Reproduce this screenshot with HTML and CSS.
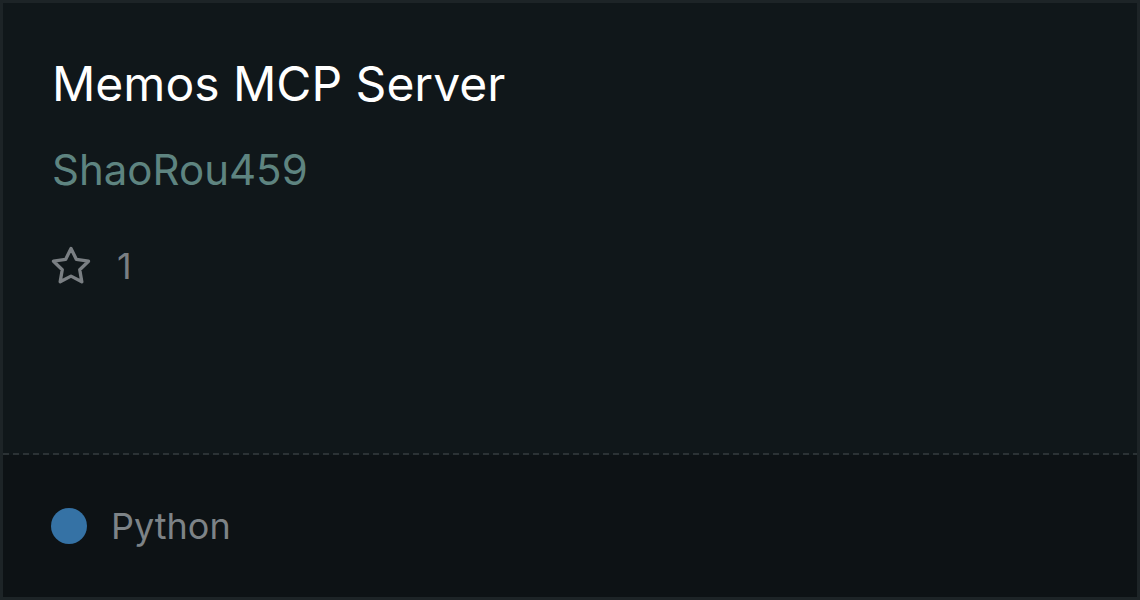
FILE: index.html
```html
<!DOCTYPE html>
<html lang="en">
<head>
  <meta charset="UTF-8">
  <meta name="viewport" content="width=device-width, initial-scale=1.0">
  <title>Memos MCP Server</title>
  <link rel="stylesheet" href="styles.css">
</head>
<body>
  <div class="card">
    <div class="card-main">
      <h1 class="title">Memos MCP Server</h1>
      <div class="author">ShaoRou459</div>
      <div class="stars">
        <svg class="star-icon" viewBox="0 0 24 24" fill="none" stroke="currentColor" stroke-width="1.9" stroke-linecap="round" stroke-linejoin="round">
          <polygon points="12 2 15.09 8.26 22 9.27 17 14.14 18.18 21.02 12 17.77 5.82 21.02 7 14.14 2 9.27 8.91 8.26 12 2"></polygon>
        </svg>
        <span class="star-count">1</span>
      </div>
    </div>
    <div class="divider"></div>
    <div class="card-footer">
      <span class="lang-dot"></span>
      <span class="lang-name">Python</span>
    </div>
  </div>
</body>
</html>
```

FILE: styles.css
```css
html, body {
  margin: 0;
  height: 100%;
}
body {
  font-family: Inter, "Noto Sans", sans-serif;
  background: #0d1215;
}
.card {
  box-sizing: border-box;
  height: 100vh;
  border: 3px solid #1d2427;
  background: #10171a;
  display: flex;
  flex-direction: column;
}
.card-main {
  flex: 1;
  padding: 52px 49px 0 49px;
}
.title {
  margin: 0;
  font-size: 48px;
  line-height: 58px;
  font-weight: 400;
  color: #ffffff;
}
.author {
  margin-top: 33px;
  font-size: 42px;
  line-height: 48px;
  color: #5e8480;
}
.stars {
  margin-top: 50px;
  display: flex;
  align-items: center;
  gap: 25px;
  color: #7a7f83;
}
.star-icon {
  width: 42px;
  height: 42px;
  margin-left: -2px;
}
.star-count {
  font-size: 36px;
  line-height: 44px;
}
.divider {
  height: 2px;
  background: repeating-linear-gradient(90deg, #2b3235 0 6px, transparent 6px 10px);
}
.card-footer {
  height: 142px;
  background: #0d1215;
  display: flex;
  align-items: center;
  padding-left: 48px;
  gap: 24px;
}
.lang-dot {
  width: 36px;
  height: 36px;
  border-radius: 50%;
  background: #3572a5;
}
.lang-name {
  font-size: 36px;
  line-height: 44px;
  color: #7d8387;
}
```
